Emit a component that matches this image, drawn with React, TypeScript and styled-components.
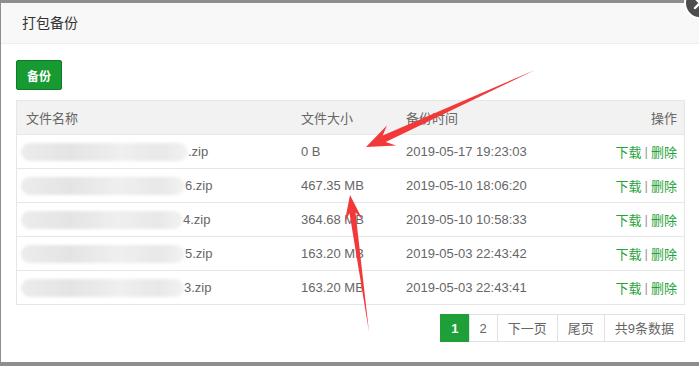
import React from 'react';
import styled, { createGlobalStyle } from 'styled-components';

const GlobalStyle = createGlobalStyle`
  html, body {
    margin: 0;
    padding: 0;
    overflow: hidden;
  }
  body {
    font-family: "Liberation Sans", "Noto Sans CJK SC", sans-serif;
  }
`;

const Backdrop = styled.div`
  position: relative;
  width: 699px;
  height: 366px;
  background: #8e8e8e;
  padding: 3px 0 0 1px;
  box-sizing: border-box;
  overflow: hidden;
`;

const Dialog = styled.div`
  position: relative;
  width: 699px;
  height: 359px;
  background: #fff;
  box-sizing: border-box;
`;

const Header = styled.div`
  height: 41px;
  line-height: 41px;
  padding-left: 21px;
  background: #f8f8f8;
  border-bottom: 1px solid #eee;
  box-sizing: border-box;
  font-size: 14px;
  color: #333;
`;

const CloseBtn = styled.div`
  position: absolute;
  top: -16px;
  right: -16px;
  width: 32px;
  height: 32px;
  border-radius: 50%;
  background: #4d4d4d;
  border: 2px solid #fff;
  box-sizing: border-box;
  display: flex;
  align-items: center;
  justify-content: center;
`;

const Body = styled.div`
  padding: 16px 15px 0 15px;
`;

const BackupButton = styled.button`
  width: 46px;
  height: 30px;
  padding: 0;
  background: #179a31;
  border: 1px solid #117a26;
  border-radius: 2px;
  color: #fff;
  font-family: "Noto Sans CJK SC", sans-serif;
  font-size: 12px;
  font-weight: bold;
`;

const Table = styled.div`
  margin-top: 10px;
  border: 1px solid #e6e6e6;
`;

const Row = styled.div<{ $head?: boolean }>`
  display: grid;
  grid-template-columns: 275px 105px 1fr 110px;
  align-items: center;
  height: 34px;
  border-bottom: 1px solid #e6e6e6;
  box-sizing: border-box;
  background: ${(p) => (p.$head ? '#f2f2f2' : '#fff')};
  font-size: 13px;
  color: #666;
  &:last-child {
    border-bottom: none;
    height: 33px;
  }
`;

const Cell = styled.div<{ $right?: boolean }>`
  padding: ${(p) => (p.$right ? '0 7px 0 0' : '0 0 0 9px')};
  white-space: nowrap;
  display: flex;
  align-items: center;
  justify-content: ${(p) => (p.$right ? 'flex-end' : 'flex-start')};
`;

const Smudge = styled.span<{ $w: number }>`
  display: inline-block;
  width: ${(p) => p.$w}px;
  height: 18px;
  margin-left: -5px;
  border-radius: 9px;
  background: linear-gradient(90deg, #ececec 0%, #e4e4e4 30%, #efefef 60%, #e8e8e8 85%, #f3f3f3 100%);
  filter: blur(1.5px);
`;

const Link = styled.span`
  color: #1fa33a;
`;

const Sep = styled.span`
  color: #999;
  margin: 0 3px;
`;

const Pager = styled.div`
  display: flex;
  justify-content: flex-end;
  margin-top: 9px;
`;

const PageItem = styled.span<{ $active?: boolean }>`
  height: 28px;
  line-height: 28px;
  padding: 0 10px;
  min-width: 9px;
  text-align: center;
  border: 1px solid ${(p) => (p.$active ? '#1e9f37' : '#e2e2e2')};
  margin-left: -1px;
  box-sizing: border-box;
  font-size: 13px;
  color: ${(p) => (p.$active ? '#fff' : '#666')};
  background: ${(p) => (p.$active ? '#1e9f37' : '#fff')};
  font-weight: ${(p) => (p.$active ? 'bold' : 'normal')};
`;

const Arrows = styled.svg`
  position: absolute;
  left: 0;
  top: 0;
  pointer-events: none;
`;

const rows = [
  { w: 167, suffix: '.zip', size: '0 B', time: '2019-05-17 19:23:03' },
  { w: 164, suffix: '6.zip', size: '467.35 MB', time: '2019-05-10 18:06:20' },
  { w: 162, suffix: '4.zip', size: '364.68 MB', time: '2019-05-10 10:58:33' },
  { w: 164, suffix: '5.zip', size: '163.20 MB', time: '2019-05-03 22:43:42' },
  { w: 163, suffix: '3.zip', size: '163.20 MB', time: '2019-05-03 22:43:41' },
];

const App: React.FC = () => {
  return (
    <>
      <GlobalStyle />
      <Backdrop>
        <Dialog>
          <Header>打包备份</Header>
          <CloseBtn>
            <svg width="14" height="14" viewBox="0 0 14 14">
              <path d="M2 2 L12 12 M12 2 L2 12" stroke="#fff" strokeWidth="2.4" strokeLinecap="round" />
            </svg>
          </CloseBtn>
          <Body>
            <BackupButton>备份</BackupButton>
            <Table>
              <Row $head>
                <Cell>文件名称</Cell>
                <Cell>文件大小</Cell>
                <Cell>备份时间</Cell>
                <Cell $right>操作</Cell>
              </Row>
              {rows.map((r, i) => (
                <Row key={i}>
                  <Cell>
                    <Smudge $w={r.w} />
                    {r.suffix}
                  </Cell>
                  <Cell>{r.size}</Cell>
                  <Cell>{r.time}</Cell>
                  <Cell $right>
                    <Link>下载</Link>
                    <Sep>|</Sep>
                    <Link>删除</Link>
                  </Cell>
                </Row>
              ))}
            </Table>
            <Pager>
              <PageItem $active>1</PageItem>
              <PageItem>2</PageItem>
              <PageItem>下一页</PageItem>
              <PageItem>尾页</PageItem>
              <PageItem>共9条数据</PageItem>
            </Pager>
          </Body>
        </Dialog>
        <Arrows width="699" height="366" viewBox="0 0 699 366">
          <polygon
            points="535,70 385.7,141.9 396.1,145.4 366,147 386.9,125.4 382.7,135.5"
            fill="#f23838"
          />
          <polygon
            points="369,332 349.5,213.2 344.7,222 350,195 362.5,219.6 355.5,212.4"
            fill="#f23838"
          />
        </Arrows>
      </Backdrop>
    </>
  );
};

export default App;
